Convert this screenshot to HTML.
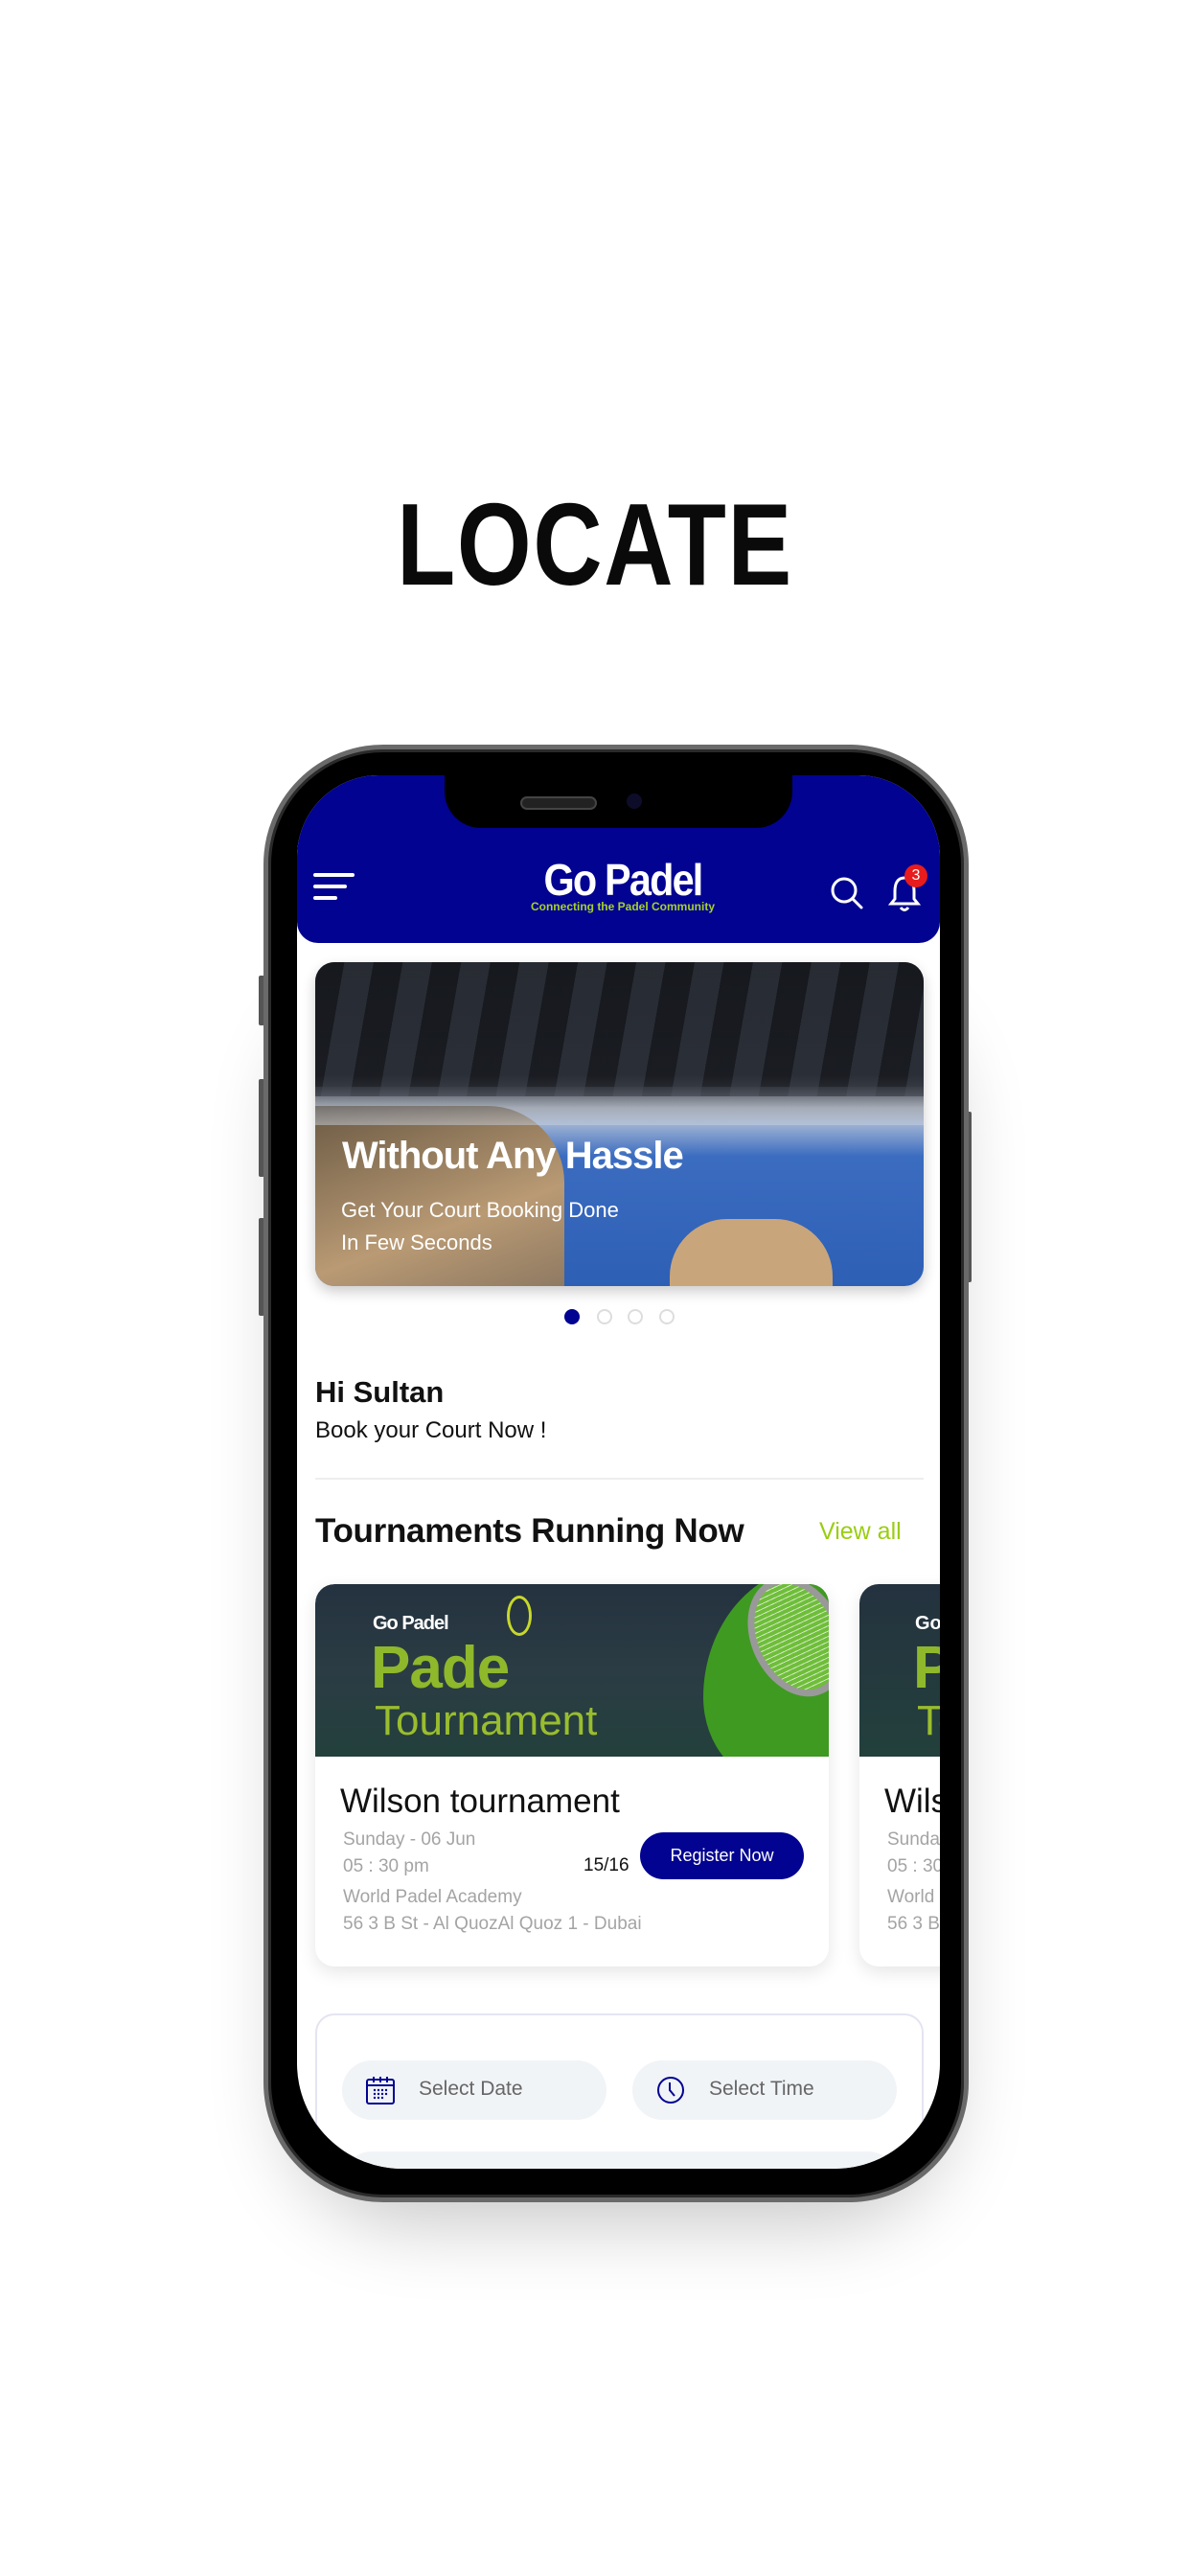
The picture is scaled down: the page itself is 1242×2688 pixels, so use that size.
<!DOCTYPE html>
<html><head><meta charset="utf-8"><style>
*{margin:0;padding:0;box-sizing:border-box}
body{width:1242px;height:2688px;background:#fff;position:relative;overflow:hidden;font-family:"Liberation Sans",sans-serif}
.abs{position:absolute}
.title{left:0;width:1242px;top:498px;text-align:center;font-weight:bold;font-size:122px;color:#0a0a0a;transform:scaleX(0.82);letter-spacing:2px}
.shadow{left:300px;top:1000px;width:690px;height:1280px;border-radius:130px;box-shadow:0 40px 80px rgba(0,0,0,0.22)}
.frame{left:275px;top:777px;width:736px;height:1521px;border-radius:125px;background:#000;border:5px solid #6a6a6a;box-shadow:inset 0 0 0 3px #2a2a2a}
.btn{background:#555;width:6px;border-radius:2px}
.screen{left:310px;top:809px;width:671px;height:1454px;border-radius:85px 85px 110px 110px;background:#fff;overflow:hidden}
.header{left:0;top:0;width:671px;height:175px;background:#020391;border-radius:0 0 22px 22px}
.notch{left:154px;top:0;width:363px;height:55px;background:#000;border-radius:0 0 38px 38px}
.grey{color:#a4a4a4;font-size:19px}
</style></head><body>
<div class="abs title">LOCATE</div>
<div class="abs shadow"></div>
<div class="abs btn" style="left:270px;top:1018px;height:52px"></div>
<div class="abs btn" style="left:270px;top:1126px;height:102px"></div>
<div class="abs btn" style="left:270px;top:1271px;height:102px"></div>
<div class="abs btn" style="left:1008px;top:1160px;height:178px"></div>
<div class="abs frame"></div>
<div class="abs screen">
  <div class="abs header">
    <div class="abs" style="left:17px;top:102px;width:43px;height:4px;background:#fff;border-radius:2px"></div>
    <div class="abs" style="left:17px;top:114px;width:35px;height:4px;background:#fff;border-radius:2px"></div>
    <div class="abs" style="left:17px;top:126px;width:25px;height:4px;background:#fff;border-radius:2px"></div>
    <div class="abs" style="left:240px;top:82px;width:200px;text-align:center;color:#fff;font-size:46px;font-weight:bold;letter-spacing:-2px;transform:scaleX(0.9)">Go Padel</div>
    <div class="abs" style="left:240px;top:130px;width:200px;text-align:center;color:#a6d12a;font-size:12px;font-weight:bold">Connecting the Padel Community</div>
    <svg class="abs" style="left:555px;top:104px" width="38" height="38" viewBox="0 0 38 38"><circle cx="16" cy="16" r="12" fill="none" stroke="#fff" stroke-width="3"/><path d="M25 25 L34 34" stroke="#fff" stroke-width="3" stroke-linecap="round"/></svg>
    <svg class="abs" style="left:616px;top:103px" width="36" height="40" viewBox="0 0 36 40"><path d="M18 4 C10 4 8 11 8 18 L8 26 L4 31 L32 31 L28 26 L28 18 C28 11 26 4 18 4Z" fill="none" stroke="#fff" stroke-width="3"/><path d="M14 35 Q18 40 22 35" fill="none" stroke="#fff" stroke-width="3"/></svg>
    <div class="abs" style="left:634px;top:93px;width:24px;height:24px;border-radius:50%;background:#e81c1c;color:#fff;font-size:16px;text-align:center;line-height:24px">3</div>
  </div>
  <div class="abs notch"></div>
  <div class="abs" style="top:22px;width:80px;height:14px;background:#222;border-radius:7px;border:2px solid #444;left:233px"></div>
  <div class="abs" style="left:344px;top:19px;width:16px;height:16px;background:#0d0d2a;border-radius:50%"></div>
  <div class="abs" style="left:19px;top:195px;width:635px;height:338px;border-radius:20px;overflow:hidden;box-shadow:0 6px 14px rgba(0,0,0,0.2);background:linear-gradient(180deg,#1c1f26 0%,#2b2f38 35%,#cfd4dc 45%,#3b6cc0 60%,#2d5fb5 100%)">
    <div class="abs" style="left:0;top:150px;width:260px;height:200px;background:linear-gradient(160deg,#6b5a44,#b99a74 60%,#8a7660);border-radius:0 80px 0 0"></div>
    <div class="abs" style="left:370px;top:268px;width:170px;height:80px;background:#c9a57c;border-radius:60px 60px 0 0"></div>
    <div class="abs" style="left:0;top:0;width:635px;height:140px;background:repeating-linear-gradient(100deg,#15171c 0 30px,#2a2e36 30px 60px);opacity:0.8"></div>
    <div class="abs" style="left:0;top:130px;width:635px;height:40px;background:linear-gradient(180deg,rgba(60,65,75,0.6),rgba(200,210,225,0.5))"></div>
    <div class="abs" style="left:28px;top:180px;color:#fff;font-size:40px;font-weight:bold;letter-spacing:-1px">Without Any Hassle</div>
    <div class="abs" style="left:27px;top:242px;color:#fff;font-size:22px;line-height:34px">Get Your Court Booking Done<br>In Few Seconds</div>
  </div>
  <div class="abs" style="left:279px;top:557px;width:16px;height:16px;border-radius:50%;background:#020391"></div>
  <div class="abs" style="left:313px;top:557px;width:16px;height:16px;border-radius:50%;border:2px solid #ddd"></div>
  <div class="abs" style="left:345px;top:557px;width:16px;height:16px;border-radius:50%;border:2px solid #ddd"></div>
  <div class="abs" style="left:378px;top:557px;width:16px;height:16px;border-radius:50%;border:2px solid #ddd"></div>
  <div class="abs" style="left:19px;top:626px;font-size:31px;font-weight:bold;color:#111">Hi Sultan</div>
  <div class="abs" style="left:19px;top:670px;font-size:24px;color:#111">Book your Court Now !</div>
  <div class="abs" style="left:19px;top:733px;width:635px;height:2px;background:#eee"></div>
  <div class="abs" style="left:19px;top:769px;font-size:35px;font-weight:bold;color:#111;letter-spacing:-0.3px">Tournaments Running Now</div>
  <div class="abs" style="left:545px;top:775px;font-size:25px;color:#9acd12">View all</div>
  <div class="abs" style="left:19px;top:844px;width:536px;height:399px;border-radius:20px;background:#fff;box-shadow:0 6px 18px rgba(0,0,0,0.1);overflow:hidden">
    <div class="abs" style="left:0;top:0;width:536px;height:180px;background:linear-gradient(180deg,#24323f 0%,#2b3c44 50%,#23403c 100%);border-radius:20px 20px 0 0;overflow:hidden">
      <div class="abs" style="left:405px;top:-20px;width:200px;height:230px;background:#3f9a22;border-radius:60% 0 0 40%"></div>
      <div class="abs" style="left:455px;top:-10px;width:95px;height:130px;border:7px solid #999;border-radius:50%;background:repeating-linear-gradient(0deg,#6fbe3a 0 4px,#cfe8c0 4px 5px);transform:rotate(-25deg)"></div>
      <div class="abs" style="left:60px;top:30px;color:#fff;font-size:20px;font-weight:bold;letter-spacing:-1px">Go Padel</div>
      <div class="abs" style="left:58px;top:52px;color:#8fb82b;font-size:62px;font-weight:bold;letter-spacing:-1px">Pade</div>
      <div class="abs" style="left:62px;top:118px;color:#9abd2e;font-size:44px">Tournament</div>
      <div class="abs" style="left:200px;top:12px;width:26px;height:42px;border:3px solid #c8d82a;border-radius:50%"></div>
    </div>
    <div class="abs" style="left:26px;top:207px;font-size:35px;color:#111">Wilson tournament</div>
    <div class="abs grey" style="left:29px;top:253px;line-height:28px">Sunday - 06 Jun<br>05 : 30 pm</div>
    <div class="abs grey" style="left:29px;top:313px;line-height:28px">World Padel Academy<br>56 3 B St - Al QuozAl Quoz 1 - Dubai</div>
    <div class="abs" style="left:280px;top:283px;font-size:19px;color:#111">15/16</div>
    <div class="abs" style="left:339px;top:259px;width:171px;height:49px;border-radius:25px;background:#020391;color:#fff;font-size:18px;text-align:center;line-height:49px">Register Now</div>
  </div>
  <div class="abs" style="left:587px;top:844px;width:200px;height:399px;border-radius:20px;background:#fff;box-shadow:0 6px 18px rgba(0,0,0,0.1);overflow:hidden">
    <div class="abs" style="left:0;top:0;width:200px;height:180px;background:linear-gradient(180deg,#24323f,#23403c)"></div>
    <div class="abs" style="left:58px;top:30px;color:#fff;font-size:20px;font-weight:bold">Go Padel</div>
    <div class="abs" style="left:56px;top:52px;color:#8fb82b;font-size:62px;font-weight:bold">Pade</div>
    <div class="abs" style="left:60px;top:118px;color:#9abd2e;font-size:44px">Tournament</div>
    <div class="abs" style="left:26px;top:207px;font-size:35px;color:#111">Wilson</div>
    <div class="abs grey" style="left:29px;top:253px;line-height:28px">Sunday<br>05 : 30</div>
    <div class="abs grey" style="left:29px;top:313px;line-height:28px">World<br>56 3 B</div>
  </div>
  <div class="abs" style="left:19px;top:1292px;width:635px;height:300px;border:2px solid #e4e4f2;border-radius:20px"></div>
  <div class="abs" style="left:47px;top:1341px;width:276px;height:62px;border-radius:31px;background:#f1f4f7"></div>
  <div class="abs" style="left:350px;top:1341px;width:276px;height:62px;border-radius:31px;background:#f1f4f7"></div>
  <svg class="abs" style="left:71px;top:1356px" width="32" height="32" viewBox="0 0 32 32"><rect x="2" y="5" width="28" height="25" rx="2" fill="none" stroke="#020391" stroke-width="2"/><path d="M2 11H30M9 2V8M16 2V8M23 2V8" stroke="#020391" stroke-width="2"/><g fill="#020391"><circle cx="10" cy="16" r="1.2"/><circle cx="14" cy="16" r="1.2"/><circle cx="18" cy="16" r="1.2"/><circle cx="22" cy="16" r="1.2"/><circle cx="10" cy="20" r="1.2"/><circle cx="14" cy="20" r="1.2"/><circle cx="18" cy="20" r="1.2"/><circle cx="22" cy="20" r="1.2"/><circle cx="10" cy="24" r="1.2"/><circle cx="14" cy="24" r="1.2"/><circle cx="18" cy="24" r="1.2"/></g></svg>
  <div class="abs" style="left:127px;top:1359px;font-size:21px;color:#666">Select Date</div>
  <svg class="abs" style="left:374px;top:1356px" width="32" height="32" viewBox="0 0 32 32"><circle cx="16" cy="16" r="13" fill="none" stroke="#020391" stroke-width="2"/><path d="M15 8V16L20 22" fill="none" stroke="#020391" stroke-width="2"/></svg>
  <div class="abs" style="left:430px;top:1359px;font-size:21px;color:#666">Select Time</div>
  <div class="abs" style="left:47px;top:1436px;width:580px;height:62px;border-radius:31px;background:#f1f4f7"></div>
</div>
</body></html>
